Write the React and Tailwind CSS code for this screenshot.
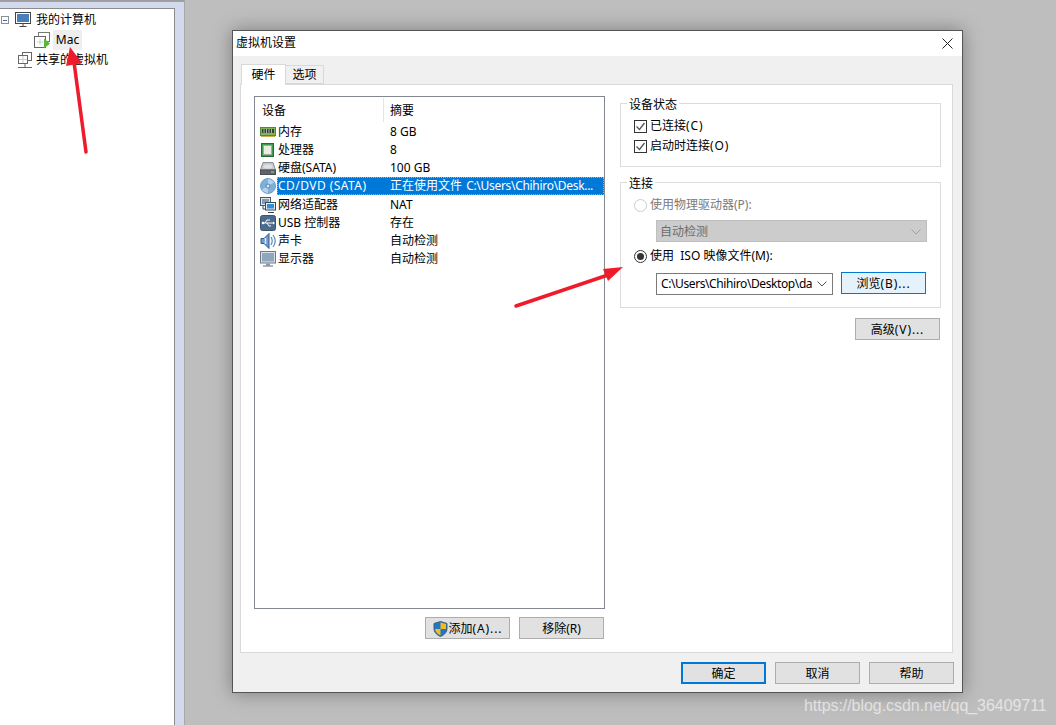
import React from "react";

function RamIcon() {
  return (
    <svg width="16" height="16" viewBox="0 0 16 16">
      <rect x="0.500" y="3.500" width="15" height="8" fill="#7fb55f" stroke="#4f8a3a" />
      <rect x="2" y="5" width="12" height="4" fill="#35402f" />
      <path d="M4 5v4M6.500 5v4M9 5v4M11.500 5v4" stroke="#a9b5a5" />
      <path d="M1 12.500h14" stroke="#c9b04a" />
    </svg>
  );
}

function CpuIcon() {
  return (
    <svg width="16" height="16" viewBox="0 0 16 16">
      <rect x="1.500" y="1.500" width="12" height="13" fill="#3b9a4b" stroke="#1f7030" />
      <rect x="3.500" y="3.500" width="8" height="9" fill="#ecece6" stroke="#a8a8a0" />
    </svg>
  );
}

function DiskIcon() {
  return (
    <svg width="16" height="16" viewBox="0 0 16 16">
      <path d="M3 2.500h10l2.500 7.500H.5z" fill="#c6c9ce" stroke="#8b8e94" />
      <ellipse cx="8" cy="6.500" rx="4.500" ry="2" fill="#dfe1e4" />
      <rect x="0.500" y="10" width="15" height="4.500" fill="#5f6369" stroke="#4b4e53" />
      <rect x="11" y="11.500" width="3" height="1" fill="#8fe08a" />
    </svg>
  );
}

function CdIcon() {
  return (
    <svg width="16" height="16" viewBox="0 0 16 16">
      <circle cx="8" cy="8" r="7.500" fill="#7fb0da" stroke="#6f9fc8" />
      <path d="M8 1a7 7 0 0 1 6 3.500L8 8zM8 15a7 7 0 0 1-6-3.500L8 8z" fill="#b4d2ec" />
      <circle cx="8" cy="8" r="2" fill="#dcebf7" stroke="#4f83b0" />
    </svg>
  );
}

function NetworkIcon() {
  return (
    <svg width="16" height="16" viewBox="0 0 16 16">
      <rect x="0.500" y="0.500" width="10" height="8" fill="#dfe6ee" stroke="#4a5661" />
      <rect x="2" y="2" width="7" height="5" fill="#7f9db8" />
      <rect x="5.500" y="5.500" width="10" height="7.500" fill="#e6ecf2" stroke="#3c4853" />
      <rect x="7" y="7" width="7" height="4.500" fill="#2f8fd8" />
      <path d="M8 15.500h6M3 9v3h2" stroke="#3c4853" fill="none" />
    </svg>
  );
}

function UsbIcon() {
  return (
    <svg width="16" height="16" viewBox="0 0 16 16">
      <rect x="0.500" y="0.500" width="15" height="15" rx="2" fill="#4d6b8c" stroke="#3c5470" />
      <path d="M2 8h11M5 8l2-3h3M7 8l2 3h2" stroke="#fff" fill="none" />
      <path d="M13 6.500l2 1.500-2 1.500z" fill="#fff" />
      <circle cx="3" cy="8" r="1.300" fill="#fff" />
    </svg>
  );
}

function SoundIcon() {
  return (
    <svg width="16" height="18" viewBox="0 0 16 18">
      <path d="M1 6.500h3L9 1.500v15l-5-5H1z" fill="#6f9ccc" stroke="#2e5a8c" />
      <path d="M5.500 6v6" stroke="#dfeaf5" strokeWidth="1.500" />
      <path d="M11 5c1.500 2.500 1.500 5.500 0 8M13 3c2.700 3.600 2.700 8.400 0 12" stroke="#5b87b5" strokeWidth="1.200" fill="none" />
    </svg>
  );
}

function DisplayIcon() {
  return (
    <svg width="16" height="16" viewBox="0 0 16 16">
      <rect x="0.500" y="0.500" width="15" height="11.500" fill="#dbe2ea" stroke="#6c7a88" />
      <rect x="2" y="2" width="12" height="8.500" fill="#8fa6bd" />
      <path d="M6 12.500h4v2H6z" fill="#8b98a5" />
      <path d="M3 15h10" stroke="#5d6a77" />
    </svg>
  );
}

function PcIcon() {
  return (
    <svg width="16" height="16" viewBox="0 0 16 16">
      <rect x="0.500" y="0.500" width="15" height="11" fill="#fff" stroke="#444" />
      <rect x="2" y="2" width="12" height="8" fill="#4a7fb8" />
      <path d="M8 12v2.500M4.500 14.500h7" stroke="#444" />
    </svg>
  );
}

function VmIcon() {
  return (
    <svg width="17" height="17" viewBox="0 0 17 17">
      <rect x="4.500" y="0.500" width="11" height="9" fill="#fff" stroke="#777" />
      <rect x="0.500" y="4.500" width="11" height="11" fill="#fff" stroke="#666" />
      <path d="M3 10h6M6 7v6" stroke="#c4cfdc" />
      <path d="M10 6.500l6 5-6 5z" fill="#5bb834" />
    </svg>
  );
}

function SharedIcon() {
  return (
    <svg width="16" height="17" viewBox="0 0 16 17">
      <rect x="5.500" y="0.500" width="9" height="8" fill="#fff" stroke="#666" />
      <rect x="1.500" y="3.500" width="9" height="8" fill="#fff" stroke="#666" />
      <path d="M6 4v7M2 7.500h8" stroke="#c4cfdc" />
      <path d="M8 12v3M1 15.500h14" stroke="#666" />
    </svg>
  );
}

function ShieldIcon() {
  return (
    <svg width="15" height="16" viewBox="0 0 15 16">
      <path d="M7.500.5L14 2.500v5c0 3.500-2.500 6.300-6.500 8C3.500 13.800 1 11 1 7.500v-5z" fill="#1e78c8" stroke="#4a5a6a" />
      <path d="M7.500 1.500V8H13V3zM7.500 8v6.500C4.500 13 2.200 11 2 8z" fill="#f6b91e" />
    </svg>
  );
}

function Chevron({ color }) {
  return (
    <svg width="10" height="6" viewBox="0 0 10 6">
      <path d="M0.500 0.500L5 5l4.500-4.500" stroke={color} fill="none" />
    </svg>
  );
}

function Checkbox() {
  return (
    <span className="w-[13px] h-[13px] border border-[#333333] bg-white flex items-center justify-center shrink-0">
      <svg width="11" height="11" viewBox="0 0 11 11">
        <path d="M1.500 5.500L4.500 8.500L9.500 2" stroke="#555555" strokeWidth="1.300" fill="none" />
      </svg>
    </span>
  );
}

function Radio({ checked }) {
  return (
    <span
      className={
        checked
          ? "w-[13px] h-[13px] rounded-full border border-[#333333] bg-white flex items-center justify-center shrink-0"
          : "w-[13px] h-[13px] rounded-full border border-[#cccccc] bg-white shrink-0"
      }
    >
      {checked && <span className="w-[7px] h-[7px] rounded-full bg-[#333333]" />}
    </span>
  );
}

function Btn({ children, className = "" }) {
  return (
    <button className={`h-[22px] w-[85px] pt-[2px] border border-[#adadad] bg-[#e1e1e1] flex items-center justify-center text-[12px] text-black ${className}`}>
      {children}
    </button>
  );
}

// latin part of a label runs wider than the default font here
function Wide({ children }) {
  return <span className="tracking-[0.9px]">{children}</span>;
}

const devices = [
  { icon: <RamIcon />, name: "内存", info: "8 GB" },
  { icon: <CpuIcon />, name: "处理器", info: "8" },
  { icon: <DiskIcon />, name: "硬盘(SATA)", info: "100 GB" },
  {
    icon: <CdIcon />,
    name: <span className="tracking-[0.45px]">CD/DVD (SATA)</span>,
    info: (
      <>
        正在使用文件 <span className="ml-[1px] tracking-[-0.3px]">C:\Users\Chihiro\Desk...</span>
      </>
    ),
    selected: true,
  },
  { icon: <NetworkIcon />, name: "网络适配器", info: "NAT" },
  { icon: <UsbIcon />, name: "USB 控制器", info: "存在" },
  { icon: <SoundIcon />, name: "声卡", info: "自动检测" },
  { icon: <DisplayIcon />, name: "显示器", info: "自动检测" },
];

function DeviceRow({ device }) {
  return (
    <div className="flex items-center h-[18.15px] pl-[5px]">
      <span className="w-[16px] h-[16px] shrink-0 flex items-center">{device.icon}</span>
      <div
        className={
          device.selected
            ? "flex items-center h-[18px] flex-1 ml-[1px] pl-[1px] bg-[#0078d7] text-white outline-1 outline-dotted outline-[#f6a23c] -outline-offset-1"
            : "flex items-center h-[18px] flex-1 ml-[1px] pl-[1px]"
        }
      >
        <span className="w-[112px] shrink-0">{device.name}</span>
        <span className="whitespace-nowrap">{device.info}</span>
      </div>
    </div>
  );
}

function DeviceList() {
  return (
    <div className="w-[351px] h-[513px] border border-[#828790] bg-white">
      <div className="flex h-[26px] pt-[1px]">
        <div className="w-[129px] h-[24px] border-r border-[#e5e5e5] pl-[7px] pt-[1px] flex items-center">设备</div>
        <div className="flex-1 pl-[6px] pt-[1px] flex items-center">摘要</div>
      </div>
      {devices.map((d, i) => (
        <DeviceRow key={i} device={d} />
      ))}
    </div>
  );
}

function Group({ title, className, children }) {
  return (
    <div className={`relative w-[321px] border border-[#dcdcdc] ${className}`}>
      <span className="absolute -top-[7px] left-[6px] bg-white px-[2px] leading-[16px]">{title}</span>
      {children}
    </div>
  );
}

function StatusGroup() {
  return (
    <Group title="设备状态" className="h-[64px] pt-[12px] pl-[13px]">
      <div className="flex items-center h-[20px] gap-[3px]">
        <Checkbox />
        <span>已连接<Wide>(C)</Wide></span>
      </div>
      <div className="flex items-center h-[20px] gap-[3px]">
        <Checkbox />
        <span>启动时连接<Wide>(O)</Wide></span>
      </div>
    </Group>
  );
}

function ConnectGroup() {
  return (
    <Group title="连接" className="h-[126px] mt-[15px] pt-[12px] pl-[13px]">
      <div className="flex items-center h-[20px] gap-[3px] text-[#7a7a7a]">
        <Radio />
        <span>使用物理驱动器(P):</span>
      </div>
      <div className="ml-[22px] mt-[5px] w-[271px] h-[22px] pt-[2px] bg-[#cccccc] border border-[#bfbfbf] flex items-center justify-between pl-[3px] pr-[5px] text-[#6d6d6d]">
        <span>自动检测</span>
        <Chevron color="#a0a0a0" />
      </div>
      <div className="flex items-center h-[20px] mt-[4px] gap-[3px]">
        <Radio checked />
        <span className="whitespace-pre">使用  ISO 映像文件(M):</span>
      </div>
      <div className="flex items-center ml-[22px] mt-[7px] gap-[8px]">
        <div className="w-[177px] h-[22px] border border-[#7a7a7a] bg-white flex items-center justify-between pl-[4px] pr-[5px]">
          <span className="whitespace-nowrap tracking-[-0.4px]">C:\Users\Chihiro\Desktop\da</span>
          <Chevron color="#555555" />
        </div>
        <Btn className="border-[#0078d7]! bg-[#e5f1fb]! -mt-[2px]">
          <span>浏览<Wide>(B)...</Wide></span>
        </Btn>
      </div>
    </Group>
  );
}

function SettingsDialog() {
  return (
    <div className="w-[731px] h-[663px] mt-[30px] ml-[47px] border border-[#555555] bg-[#f0f0f0] flex flex-col shadow-[0_0_18px_rgba(0,0,0,0.35)]">
      <div className="h-[25px] bg-white flex items-center justify-between pl-[3px] pr-[9px] pb-[1px]">
        <span>虚拟机设置</span>
        <svg width="11" height="11" viewBox="0 0 11 11">
          <path d="M0.500 0.500L10.500 10.500M10.500 0.500L0.500 10.500" stroke="#222222" />
        </svg>
      </div>
      <div className="flex items-end h-[28px] pl-[8px]">
        <div className="w-[45px] h-[21px] border border-b-0 border-[#d9d9d9] bg-white flex items-center justify-center -mb-[1px] z-10">硬件</div>
        <div className="w-[38px] h-[19px] pt-[1px] border border-l-0 border-[#d9d9d9] flex items-center justify-center">选项</div>
      </div>
      <div className="ml-[7px] w-[713px] h-[569px] border border-[#d9d9d9] bg-white flex">
        <div className="ml-[13px] mt-[11px]">
          <DeviceList />
          <div className="flex justify-end gap-[9px] mt-[8px] mr-[1px]">
            <Btn className="gap-[1px]">
              <ShieldIcon />
              <span>添加<Wide>(A)...</Wide></span>
            </Btn>
            <Btn>移除(R)</Btn>
          </div>
        </div>
        <div className="ml-[15px] mt-[18px]">
          <StatusGroup />
          <ConnectGroup />
          <div className="flex justify-end mt-[10px] mr-[1px]">
            <Btn>
              <span>高级<Wide>(V)...</Wide></span>
            </Btn>
          </div>
        </div>
      </div>
      <div className="flex justify-end gap-[9px] pr-[8px] mt-[9px]">
        <Btn className="border-2! border-[#0078d7]!">确定</Btn>
        <Btn>取消</Btn>
        <Btn>帮助</Btn>
      </div>
    </div>
  );
}

function TreeRow({ indent, icon, children }) {
  return (
    <div className={`flex items-center h-[20px] ${indent}`}>
      {icon}
      {children}
    </div>
  );
}

function LeftPanel() {
  return (
    <div className="w-[185px] h-full shrink-0 border-r border-[#a8a8a8] bg-[#d3daee] border-t-2 border-t-[#a0a0a0] pt-[6px]">
      <div className="w-[175px] h-[720px] border-t border-r border-[#8c8c8c] bg-white pt-[1px]">
        <TreeRow
          indent="pl-[1px]"
          icon={
            <span className="w-[8px] h-[8px] mr-[6px] border border-[#8e8f8f] flex items-center justify-center">
              <span className="w-[4px] h-[1px] bg-[#3f6fa8]" />
            </span>
          }
        >
          <PcIcon />
          <span className="ml-[5px]">我的计算机</span>
        </TreeRow>
        <TreeRow indent="pl-[34px]" icon={<VmIcon />}>
          <span className="ml-[2px] w-[29px] h-[20px] bg-[#eeeeee] flex items-center justify-center">Mac</span>
        </TreeRow>
        <TreeRow indent="pl-[17px]" icon={<SharedIcon />}>
          <span className="ml-[3px]">共享的虚拟机</span>
        </TreeRow>
      </div>
    </div>
  );
}

function Arrows() {
  return (
    <svg className="absolute inset-0 pointer-events-none" width="1056" height="725" viewBox="0 0 1056 725">
      <path d="M86 152L74 62" stroke="#ee1c2b" strokeWidth="3.500" strokeLinecap="round" />
      <path d="M70 47L82 63L66 66z" fill="#ee1c2b" />
      <path d="M516 306L608 275" stroke="#ee1c2b" strokeWidth="3.500" strokeLinecap="round" />
      <path d="M623 267L603 269L608 281z" fill="#ee1c2b" />
    </svg>
  );
}

export default function App() {
  return (
    <div className="relative w-[1056px] h-[725px] overflow-hidden bg-[#bebebe] flex text-[12px] leading-[16px] text-black font-['Noto_Sans','Noto_Sans_CJK_SC',sans-serif]">
      <LeftPanel />
      <SettingsDialog />
      <Arrows />
      <span className="absolute left-[804px] top-[696px] text-[16px] leading-[20px] tracking-[-0.05px] text-white/60 font-['Liberation_Sans',sans-serif]">
        https://blog.csdn.net/qq_36409711
      </span>
    </div>
  );
}
